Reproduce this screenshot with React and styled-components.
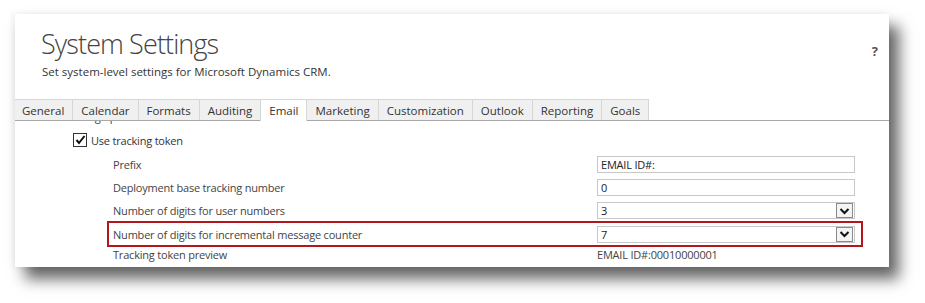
import React from "react";
import styled, { createGlobalStyle } from "styled-components";

const GlobalStyle = createGlobalStyle`
  html, body {
    margin: 0;
    padding: 0;
    background: #ffffff;
  }
  body {
    font-family: "Open Sans", "Noto Sans", sans-serif;
    color: #444;
  }
`;

const StyledPage = styled.div`
  width: 925px;
  height: 303px;
  padding: 14px 0 0 15px;
  box-sizing: border-box;
  overflow: hidden;
`;

const StyledCard = styled.div`
  width: 874px;
  height: 253px;
  background: #fff;
  box-shadow: 10px 12px 14px rgba(0, 0, 0, 0.6), -2px 0 8px rgba(0, 0, 0, 0.08);
  display: flex;
  flex-direction: column;
  overflow: hidden;
`;

const StyledHeader = styled.div`
  display: flex;
  justify-content: space-between;
  padding: 12px 11px 0 26px;
  height: 73px;
`;

const StyledTitle = styled.h1`
  margin: 0;
  font-weight: 300;
  font-size: 27px;
  line-height: 36px;
  color: #444;
  letter-spacing: -0.9px;
`;

const StyledSubtitle = styled.p`
  margin: 2px 0 0 1px;
  font-size: 11.5px;
  color: #333;
`;

const StyledHelp = styled.span`
  margin-top: 16px;
  font-weight: 700;
  font-size: 13px;
  color: #555;
`;

const StyledTabs = styled.div`
  display: flex;
  height: 21px;
  border-bottom: 1px solid #a8a8a8;
`;

const StyledTab = styled.div`
  padding: 0 8px;
  font-size: 11.5px;
  line-height: 21px;
  color: #333;
  background: ${p => (p.active ? "#fff" : "#f0f0f0")};
  border: 1px solid #d6d6d6;
  border-bottom: none;
  border-left: ${p => (p.first ? "none" : "1px solid #d6d6d6")};
  margin-left: -1px;
  box-sizing: border-box;
  height: ${p => (p.active ? "22px" : "21px")};
  position: relative;
  z-index: ${p => (p.active ? 1 : 0)};
`;

const StyledClipped = styled.div`
  height: 4px;
  overflow: hidden;
  padding-left: 44px;
  font-size: 11px;
  letter-spacing: -0.2px;
  color: #444;
  span {
    display: block;
    line-height: 14px;
    margin-top: -11px;
  }
`;

const StyledBody = styled.div`
  padding: 7px 0 0 58px;
`;

const StyledCheckRow = styled.label`
  display: flex;
  align-items: center;
  gap: 4px;
  font-size: 11px;
  letter-spacing: -0.2px;
  color: #333;
  height: 16px;
  margin-bottom: 5px;
`;

const StyledCheckbox = styled.span`
  width: 12px;
  height: 12px;
  border: 1px solid #333;
  background: #fff;
  display: flex;
  align-items: center;
  justify-content: center;
`;

const StyledRow = styled.div`
  display: flex;
  align-items: center;
  margin-left: 34px;
  padding-left: 4px;
  width: 756px;
  box-sizing: border-box;
  border: 2px solid ${p => (p.highlight ? "#b3161c" : "transparent")};
  margin-top: ${p => (p.highlight ? "-1px" : "0")};
  margin-bottom: ${p => (p.highlight ? "-4px" : "0")};
  height: ${p => (p.highlight ? "26px" : "23px")};
`;

const StyledLabel = styled.span`
  width: 484px;
  font-size: 11px;
  letter-spacing: -0.2px;
  color: #444;
`;

const StyledInput = styled.div`
  width: 258px;
  height: 17px;
  border: 1px solid #c8c8c8;
  box-sizing: border-box;
  display: flex;
  align-items: center;
  justify-content: space-between;
  font-size: 11px;
  letter-spacing: -0.2px;
  color: #222;
  padding-left: 3px;
  background: #fff;
`;

const StyledDropButton = styled.span`
  width: 17px;
  height: 15px;
  margin-right: 1px;
  border: 1px solid #8a8a8a;
  background: #f4f4f4;
  box-sizing: border-box;
  display: flex;
  align-items: center;
  justify-content: center;
`;

const StyledPreview = styled.span`
  font-size: 11px;
  letter-spacing: -0.2px;
  color: #444;
`;

const tabs = [
  "General",
  "Calendar",
  "Formats",
  "Auditing",
  "Email",
  "Marketing",
  "Customization",
  "Outlook",
  "Reporting",
  "Goals",
];

const Chevron = () => (
  <svg width="11" height="8" viewBox="0 0 11 8">
    <path d="M1.5 2 L5.5 6 L9.5 2" fill="none" stroke="#111" strokeWidth="2" />
  </svg>
);

const Field = ({ value, select }) => (
  <StyledInput>
    <span>{value}</span>
    {select && (
      <StyledDropButton>
        <Chevron />
      </StyledDropButton>
    )}
  </StyledInput>
);

const App = () => {
  return (
    <>
      <GlobalStyle />
      <StyledPage>
        <StyledCard>
          <StyledHeader>
            <div>
              <StyledTitle>System Settings</StyledTitle>
              <StyledSubtitle>Set system-level settings for Microsoft Dynamics CRM.</StyledSubtitle>
            </div>
            <StyledHelp>?</StyledHelp>
          </StyledHeader>
          <StyledTabs>
            {tabs.map((name, i) => (
              <StyledTab key={name} first={i === 0} active={name === "Email"}>
                {name}
              </StyledTab>
            ))}
          </StyledTabs>
          <StyledClipped>
            <span>Tracking options for email</span>
          </StyledClipped>
          <StyledBody>
            <StyledCheckRow>
              <StyledCheckbox>
                <svg width="11" height="10" viewBox="0 0 11 10">
                  <path d="M1.5 5 L4 8 L9.5 1" fill="none" stroke="#111" strokeWidth="2" />
                </svg>
              </StyledCheckbox>
              Use tracking token
            </StyledCheckRow>
            <StyledRow>
              <StyledLabel>Prefix</StyledLabel>
              <Field value="EMAIL ID#:" />
            </StyledRow>
            <StyledRow>
              <StyledLabel>Deployment base tracking number</StyledLabel>
              <Field value="0" />
            </StyledRow>
            <StyledRow>
              <StyledLabel>Number of digits for user numbers</StyledLabel>
              <Field value="3" select />
            </StyledRow>
            <StyledRow highlight>
              <StyledLabel>Number of digits for incremental message counter</StyledLabel>
              <Field value="7" select />
            </StyledRow>
            <StyledRow>
              <StyledLabel>Tracking token preview</StyledLabel>
              <StyledPreview>EMAIL ID#:00010000001</StyledPreview>
            </StyledRow>
          </StyledBody>
        </StyledCard>
      </StyledPage>
    </>
  );
};

export default App;
